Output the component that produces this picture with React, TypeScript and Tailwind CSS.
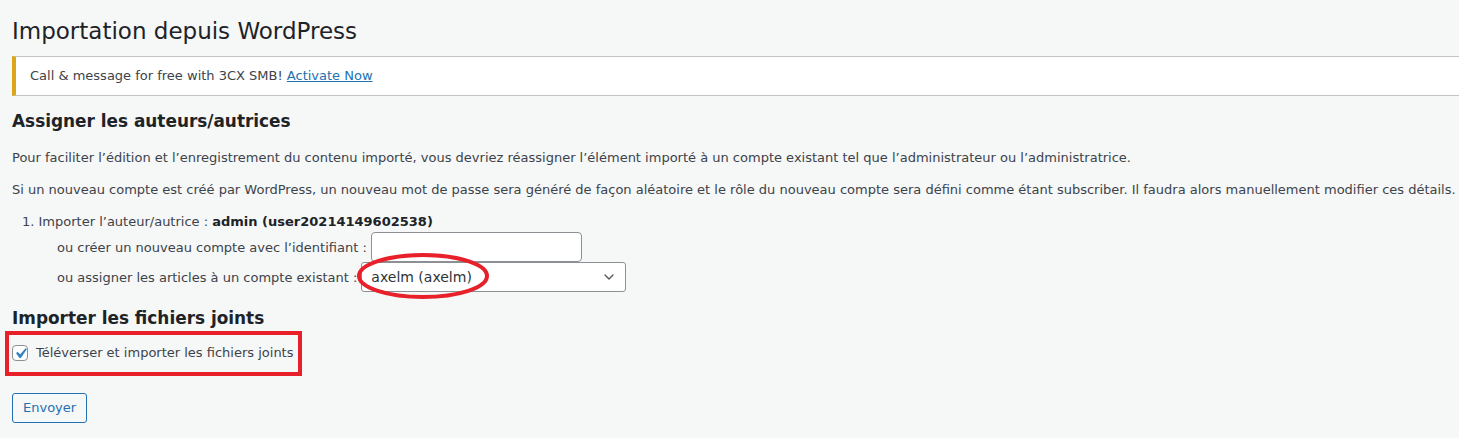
import { ChevronDown } from "lucide-react";

const font = { fontFamily: '"DejaVu Sans", "Liberation Sans", sans-serif' };

function Notice() {
  return (
    <div className="mt-[10px] flex h-[40px] items-center border-y border-r border-[#c3c4c7] border-l-4 border-l-[#dba617] bg-white pl-[14px] text-[13px] text-[#3c434a]">
      <span>
        Call &amp; message for free with 3CX SMB!{" "}
        <a href="#" className="text-[#2271b1] underline">
          Activate Now
        </a>
      </span>
    </div>
  );
}

export default function App() {
  return (
    <div
      className="relative h-[438px] w-[1459px] overflow-hidden bg-[#f6f7f7] pl-[12px] text-[13px] leading-[1.4] text-[#3c434a]"
      style={font}
    >
      <h1 className="pt-[17px] text-[23px] leading-[29px] font-normal text-[#1d2327]">
        Importation depuis WordPress
      </h1>
      <div className="-mr-[2px]">
        <Notice />
      </div>

      <h3 className="mt-[13px] text-[16.9px] leading-[24px] font-bold text-[#1d2327]">
        Assigner les auteurs/autrices
      </h3>
      <p className="mt-[15px] leading-[20px]">
        Pour faciliter l’édition et l’enregistrement du contenu importé, vous devriez réassigner l’élément importé à un compte existant tel que l’administrateur ou l’administratrice.
      </p>
      <p className="mt-[12px] whitespace-nowrap leading-[20px]">
        Si un nouveau compte est créé par WordPress, un nouveau mot de passe sera généré de façon aléatoire et le rôle du nouveau compte sera défini comme étant subscriber. Il faudra alors manuellement modifier ces détails.
      </p>

      <ol className="mt-[11px] pl-[10px]">
        <li className="leading-[21px]">
          1. Importer l’auteur/autrice : <strong className="font-bold text-[#1d2327]">admin (user20214149602538)</strong>
          <div className="pl-[35px]">
            <div className="flex items-center">
              <span>ou créer un nouveau compte avec l’identifiant :</span>
              <input
                type="text"
                className="ml-[4px] h-[30px] w-[211px] rounded-[4px] border border-[#8c8f94] bg-white"
              />
            </div>
            <div className="flex items-center">
              <span>ou assigner les articles à un compte existant :</span>
              <div className="ml-[4px] flex h-[30px] w-[265px] items-center justify-between rounded-[3px] border border-[#8c8f94] bg-white pr-[8px] pl-[9px] text-[14px] text-[#2c3338]">
                <span>axelm (axelm)</span>
                <ChevronDown className="h-[16px] w-[16px] text-[#50575e]" strokeWidth={2} />
              </div>
            </div>
          </div>
        </li>
      </ol>

      <h3 className="mt-[14px] text-[16.9px] leading-[24px] font-bold text-[#1d2327]">
        Importer les fichiers joints
      </h3>
      <label className="mt-[14px] flex items-center gap-[8px]">
        <span className="flex h-[16px] w-[16px] items-center justify-center rounded-[4px] border border-[#8c8f94] bg-white">
          <svg width="21" height="21" viewBox="0 0 20 20" className="-m-[3px] shrink-0 text-[#3582c4]">
            <path d="M14.83 4.89l1.34.94-5.81 8.38H9.02L5.78 9.67l1.34-1.25 2.57 2.4z" fill="currentColor" />
          </svg>
        </span>
        <span>Téléverser et importer les fichiers joints</span>
      </label>

      <button className="mt-[31px] h-[30px] rounded-[3px] border border-[#2271b1] bg-[#f6f7f7] px-[10px] text-[13px] leading-[28px] text-[#2271b1]">
        Envoyer
      </button>

      {/* red annotations */}
      <svg className="pointer-events-none absolute top-[252px] left-[356px]" width="134" height="48" viewBox="0 0 134 48">
        <ellipse cx="67" cy="24" rx="64" ry="21" fill="none" stroke="#e8202a" strokeWidth="4" />
      </svg>
      <div className="pointer-events-none absolute top-[331px] left-[5px] h-[45px] w-[297px] border-4 border-[#e8202a]" />
    </div>
  );
}
